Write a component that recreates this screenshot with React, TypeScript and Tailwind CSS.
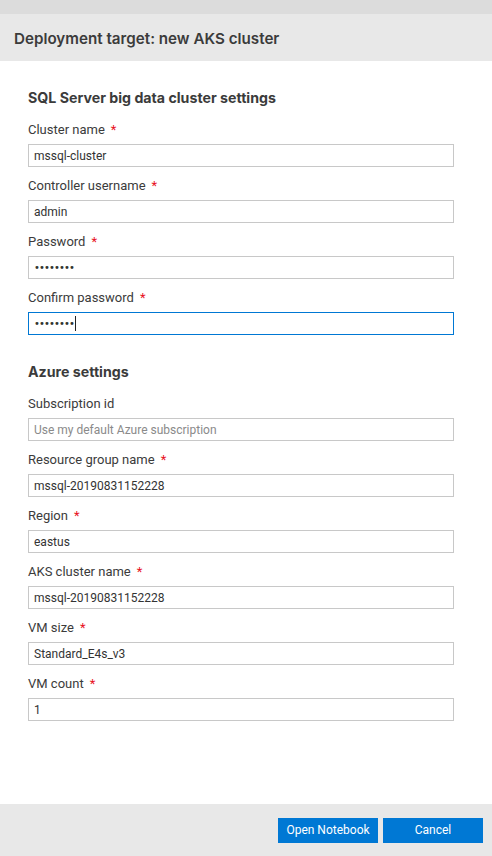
import React from 'react';

type Field = {
  label: string;
  value?: string;
  placeholder?: string;
  required?: boolean;
  kind?: 'text' | 'password' | 'focused';
};

const clusterFields: Field[] = [
  { label: 'Cluster name', value: 'mssql-cluster', required: true },
  { label: 'Controller username', value: 'admin', required: true },
  { label: 'Password', value: '••••••••', required: true, kind: 'password' },
  { label: 'Confirm password', value: '••••••••', required: true, kind: 'focused' },
];

const azureFields: Field[] = [
  { label: 'Subscription id', placeholder: 'Use my default Azure subscription' },
  { label: 'Resource group name', value: 'mssql-20190831152228', required: true },
  { label: 'Region', value: 'eastus', required: true },
  { label: 'AKS cluster name', value: 'mssql-20190831152228', required: true },
  { label: 'VM size', value: 'Standard_E4s_v3', required: true },
  { label: 'VM count', value: '1', required: true },
];

const FormField: React.FC<{ field: Field }> = ({ field }) => {
  const focused = field.kind === 'focused';
  return (
    <div className="flex flex-col mb-[9px]">
      <label className="h-[20px] leading-[20px] text-[13px] text-[#3b3b3b] mb-[4px]">
        {field.label}
        {field.required && <span className="text-[#e81123] ml-[6px]">*</span>}
      </label>
      <div
        className={`h-[23px] w-[426px] border px-[5px] flex items-center text-[12px] ${
          focused ? 'border-[#0078d4]' : 'border-[#c8c8c8]'
        }`}
      >
        {field.value ? (
          <span className={`text-[#333] ${field.kind ? 'tracking-[-0.9px] font-["DejaVu_Sans"] text-[10px]' : ''}`}>
            {field.value}
          </span>
        ) : (
          <span className="text-[#8a8a8a]">{field.placeholder}</span>
        )}
        {focused && <span className="ml-[1px] inline-block w-px h-[15px] bg-[#222]" />}
      </div>
    </div>
  );
};

const Section: React.FC<{ title: string; fields: Field[] }> = ({ title, fields }) => (
  <div className="flex flex-col">
    <h3 className="h-[20px] leading-[20px] text-[14.2px] font-bold text-[#3b3b3b] mb-[12px] font-['Inter']">
      {title}
    </h3>
    {fields.map((f) => (
      <FormField key={f.label} field={f} />
    ))}
  </div>
);

export default function App() {
  return (
    <div
      className="w-[492px] h-[856px] flex flex-col bg-white overflow-hidden"
      style={{ fontFamily: 'Roboto, "Noto Sans", sans-serif' }}
    >
      <div className="h-[14px] bg-[#dcdcdc]" />
      <div className="h-[47px] bg-[#e8e8e8] px-[14px] pt-[3px] flex items-center text-[15.2px] font-semibold text-[#3b3b3b] font-['Inter']">
        Deployment target: new AKS cluster
      </div>

      <div className="flex-1 px-[28px] pt-[27px] flex flex-col gap-[18px]">
        <Section title="SQL Server big data cluster settings" fields={clusterFields} />
        <Section title="Azure settings" fields={azureFields} />
      </div>

      <div className="h-[52px] bg-[#e8e8e8] flex items-center justify-end gap-[5px] pr-[9px]">
        <button className="w-[100px] h-[25px] bg-[#0078d4] text-white text-[12px]">Open Notebook</button>
        <button className="w-[100px] h-[25px] bg-[#0078d4] text-white text-[12px]">Cancel</button>
      </div>
    </div>
  );
}
